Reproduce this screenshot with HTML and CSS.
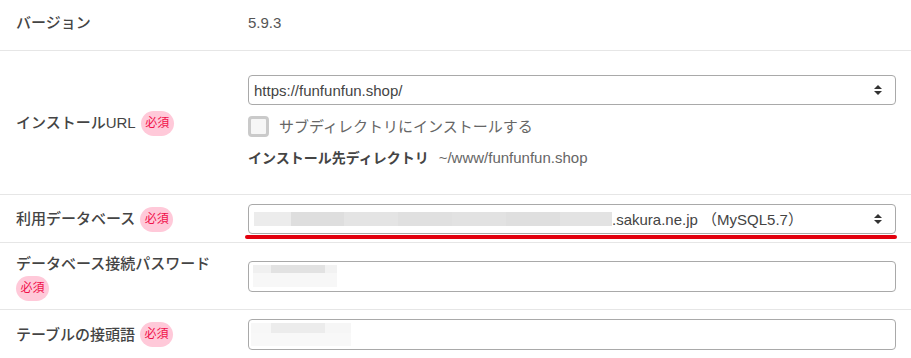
FILE: index.html
```html
<!DOCTYPE html>
<html lang="ja">
<head>
    <meta charset="UTF-8">
    <title>インストール設定</title>
    <link rel="stylesheet" href="styles.css">
</head>
<body>

<div class="form-table">

    <div class="row row-first">
        <div class="label">バージョン</div>
        <div class="value">5.9.3</div>
    </div>

    <div class="row row-tall">
        <div class="label">インストールURL<span class="req">必須</span></div>
        <div class="value">
            <div class="select">
                <span class="select-text">https://funfunfun.shop/</span>
                <span class="arrows"></span>
            </div>
            <label class="check">
                <span class="check-box"></span>
                サブディレクトリにインストールする
            </label>
            <div class="dir">
                <b>インストール先ディレクトリ</b>
                <span class="dir-path">~/www/funfunfun.shop</span>
            </div>
        </div>
    </div>

    <div class="row">
        <div class="label">利用データベース<span class="req">必須</span></div>
        <div class="value">
            <div class="marked">
                <div class="select">
                    <span class="blur blur-db">
                        <i style="width:37px;background:#ececec"></i>
                        <i style="width:53px;background:#dedede"></i>
                        <i style="width:54px;background:#e4e4e4"></i>
                        <i style="width:54px;background:#e0e0e0"></i>
                        <i style="width:54px;background:#e2e2e2"></i>
                        <i style="width:54px;background:#dfdfdf"></i>
                        <i style="width:52px;background:#e3e3e3"></i>
                    </span>
                    <span class="select-text">.sakura.ne.jp （MySQL5.7）</span>
                    <span class="arrows"></span>
                </div>
            </div>
        </div>
    </div>

    <div class="row row-two">
        <div class="label">
            <div class="label-line">データベース接続パスワード</div>
            <span class="req req-block">必須</span>
        </div>
        <div class="value">
            <div class="input">
                <span class="blur blur-pass">
                    <i class="b-top"></i>
                    <i class="b-bottom"></i>
                </span>
            </div>
        </div>
    </div>

    <div class="row">
        <div class="label">テーブルの接頭語<span class="req">必須</span></div>
        <div class="value">
            <div class="input">
                <span class="blur blur-prefix">
                    <i class="b-top"></i>
                    <i class="b-bottom"></i>
                </span>
            </div>
        </div>
    </div>

</div>

</body>
</html>
```

FILE: styles.css
```css
body {
    margin: 0;
    padding: 0;
    background-color: #fff;
    font-family: "Liberation Sans", "Noto Sans CJK JP", sans-serif;
    font-size: 15px;
    color: #555;
}

.form-table {
    width: 911px;
}

.row {
    display: grid;
    grid-template-columns: 232px 1fr;
    align-items: center;
    padding: 9px 15px 8px 16px;
    border-bottom: 1px solid #e6e6e6;
}

.row-first {
    padding-top: 10px;
    padding-bottom: 15px;
}

.row-tall {
    padding-top: 24px;
    padding-bottom: 23px;
}

.row-two {
    padding-top: 8px;
    padding-bottom: 8px;
}

.label {
    color: #444;
    font-weight: 500;
    line-height: 25px;
}

.label-line {
    height: 25px;
}

.value {
    line-height: 25px;
}

.req {
    display: inline-block;
    vertical-align: middle;
    width: 33px;
    height: 25px;
    margin-left: 5px;
    margin-top: -3px;
    border-radius: 13px;
    background-color: #ffc9d9;
    color: #f0104a;
    font-size: 12px;
    font-weight: 400;
    line-height: 25px;
    text-align: center;
}

.req-block {
    display: block;
    margin-left: 0;
    margin-top: 0;
}

.select,
.input {
    position: relative;
    display: flex;
    align-items: center;
    height: 30px;
    box-sizing: border-box;
    padding: 0 5px;
    border: 1px solid #a9a9a9;
    border-radius: 4px;
    background-color: #fff;
    color: #444;
}

.input {
    height: 31px;
}

.select-text {
    flex: 1;
    white-space: nowrap;
}

.arrows {
    width: 8px;
    height: 10px;
    margin-right: 8px;
    position: relative;
}

.arrows::before,
.arrows::after {
    content: "";
    position: absolute;
    left: 0;
    border-left: 4px solid transparent;
    border-right: 4px solid transparent;
}

.arrows::before {
    top: 0;
    border-bottom: 4px solid #333;
}

.arrows::after {
    bottom: 0;
    border-top: 4px solid #333;
}

.check {
    display: flex;
    align-items: center;
    margin-top: 11px;
    color: #666;
    line-height: 21px;
}

.check-box {
    width: 21px;
    height: 21px;
    box-sizing: border-box;
    margin-right: 10px;
    border: 3px solid #cacaca;
    border-radius: 4px;
    background-color: #f6f6f6;
}

.dir {
    margin-top: 8px;
    font-size: 14px;
}

.dir b {
    color: #444;
    font-weight: 700;
}

.dir-path {
    margin-left: 6px;
    color: #666;
    font-size: 15px;
}

.marked {
    position: relative;
}

.marked::after {
    content: "";
    position: absolute;
    left: -3px;
    right: -1px;
    bottom: -5px;
    height: 4px;
    border-radius: 2px;
    background-color: #e2000e;
}

.blur {
    display: flex;
    flex-wrap: wrap;
    align-content: flex-start;
}

.blur i {
    display: block;
    height: 14px;
}

.blur-db {
    flex: 0 0 358px;
}

.blur-pass {
    width: 84px;
    margin-left: -1px;
}

.blur-pass .b-top {
    width: 84px;
    height: 8px;
    background: linear-gradient(to right, #f0f0f0 0 18px, #e2e2e2 18px 72px, #f2f2f2 72px);
}

.blur-pass .b-bottom {
    width: 84px;
    height: 14px;
    background-color: #f7f7f7;
}

.blur-prefix {
    width: 100px;
    margin-left: -3px;
}

.blur-prefix .b-top {
    width: 100px;
    height: 10px;
    background: linear-gradient(to right, #f7f7f7 0 20px, #ececec 20px 74px, #f6f6f6 74px);
}

.blur-prefix .b-bottom {
    width: 100px;
    height: 13px;
    background-color: #f8f8f8;
}
```
